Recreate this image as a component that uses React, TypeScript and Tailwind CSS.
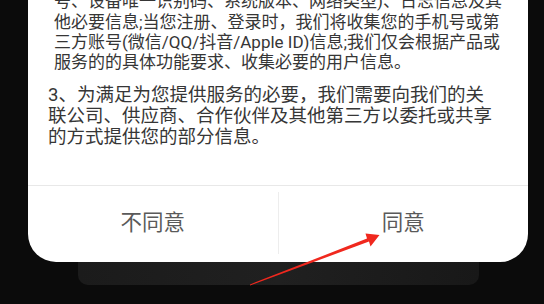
import React from "react";

const font = { fontFamily: 'Roboto, "Noto Sans CJK SC", sans-serif' };

// full-width comma kept at one em, as on the device
function Line({ text }: { text: string }) {
  const parts = text.split("，");
  return (
    <div className="whitespace-nowrap">
      {parts.map((p, i) => (
        <React.Fragment key={i}>
          {i > 0 && (
            <span className="inline-block w-[1em] font-['Noto_Sans_CJK_SC']">，</span>
          )}
          {p}
        </React.Fragment>
      ))}
    </div>
  );
}

export default function App() {
  const p1 = [
    "号、设备唯一识别码、系统版本、网络类型)、日志信息及其",
    "他必要信息;当您注册、登录时，我们将收集您的手机号或第",
    "三方账号(微信/QQ/抖音/Apple ID)信息;我们仅会根据产品或",
    "服务的的具体功能要求、收集必要的用户信息。",
  ];
  const p3 = [
    "3、为满足为您提供服务的必要，我们需要向我们的关",
    "联公司、供应商、合作伙伴及其他第三方以委托或共享",
    "的方式提供您的部分信息。",
  ];

  return (
    <div
      className="relative w-[544px] h-[304px] overflow-hidden bg-[#0b0b0b] flex flex-col"
      style={font}
    >
      <div className="ml-[28px] w-[500px] h-[262px] shrink-0 bg-white rounded-b-[28px] flex flex-col overflow-hidden relative z-10">
        <div className="h-[185px] shrink-0 overflow-hidden">
          <div className="-mt-[9.5px] pl-[26px] text-[17px] leading-[20px] text-[#363636]">
            {p1.map((l) => (
              <Line key={l} text={l} />
            ))}
          </div>
          <div className="mt-[11.5px] pl-[20px] text-[18.5px] leading-[21px] text-[#363636]">
            {p3.map((l) => (
              <Line key={l} text={l} />
            ))}
          </div>
        </div>
        <div className="flex-1 flex border-t border-[#e8e8e8] pt-[6px] pb-[8px]">
          <button className="flex-1 flex items-center justify-center text-[21.5px] text-[#5a5a5a]">
            不同意
          </button>
          <div className="w-px bg-[#ededed]" />
          <button className="flex-1 flex items-center justify-center text-[21.5px] text-[#5a5a5a]">
            同意
          </button>
        </div>
      </div>
      <div className="ml-[78px] w-[401px] h-[23px] rounded-b-[10px] bg-gradient-to-r from-[#1b1b1b] via-[#202020] to-[#181818]" />

      <svg
        className="absolute inset-0 z-20 pointer-events-none"
        width="544"
        height="304"
        viewBox="0 0 544 304"
      >
        <polygon
          points="250,284.4 367,238.6 365.5,233.5 379.5,235 370.5,246.5 369,241.6 250,285.4"
          fill="#f0281e"
        />
      </svg>
    </div>
  );
}
